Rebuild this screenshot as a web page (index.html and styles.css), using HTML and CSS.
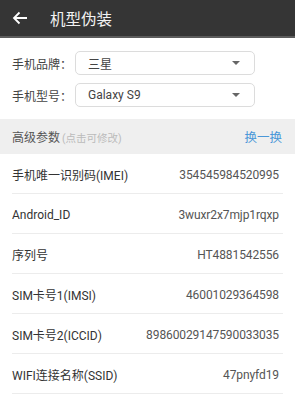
FILE: index.html
```html
<!DOCTYPE html>
<html>
<head>
<meta charset="utf-8">
<link rel="stylesheet" href="styles.css">
</head>
<body>
<div class="header">
  <svg class="back" width="16" height="14" viewBox="0 0 16 14"><path d="M15 7H2M7.5 1.5L2 7l5.5 5.5" fill="none" stroke="#fff" stroke-width="1.8"/></svg>
  <span class="title">机型伪装</span>
</div>
<div class="form">
  <div class="frow">
    <span class="flabel">手机品牌：</span>
    <div class="select"><span>三星</span><span class="caret"></span></div>
  </div>
  <div class="frow">
    <span class="flabel">手机型号：</span>
    <div class="select"><span>Galaxy S9</span><span class="caret"></span></div>
  </div>
</div>
<div class="band">
  <span class="btitle">高级参数<small>(点击可修改)</small></span>
  <span class="swap">换一换</span>
</div>
<div class="list">
  <div class="row"><span class="k">手机唯一识别码(IMEI)</span><span class="v">354545984520995</span></div>
  <div class="row"><span class="k">Android_ID</span><span class="v">3wuxr2x7mjp1rqxp</span></div>
  <div class="row"><span class="k">序列号</span><span class="v">HT4881542556</span></div>
  <div class="row"><span class="k">SIM卡号1(IMSI)</span><span class="v">46001029364598</span></div>
  <div class="row"><span class="k">SIM卡号2(ICCID)</span><span class="v">89860029147590033035</span></div>
  <div class="row"><span class="k">WIFI连接名称(SSID)</span><span class="v">47pnyfd19</span></div>
</div>
</body>
</html>
```

FILE: styles.css
```css
* { box-sizing: border-box; }
body {
  margin: 0;
  width: 295px;
  background: #fff;
  font-family: Roboto, "Noto Sans CJK SC", sans-serif;
  color: #333;
}
.header {
  height: 38px;
  background: #353535;
  border-bottom: 2px solid #5c5c5c;
  display: flex;
  align-items: center;
  padding-left: 12px;
}
.back { display: block; }
.title {
  color: #f2f2f2;
  font-size: 15.5px;
  margin-left: 22px;
  font-family: "Noto Sans CJK SC", sans-serif;
}
.form {
  padding: 13px 40px 12px 12px;
  display: flex;
  flex-direction: column;
  gap: 8px;
}
.frow {
  display: flex;
  align-items: center;
}
.flabel {
  width: 63px;
  flex-shrink: 0;
  white-space: nowrap;
  font-size: 12px;
  color: #444;
}
.select {
  flex: 1;
  height: 24px;
  border: 1px solid #dcdcdc;
  border-radius: 5px;
  display: flex;
  align-items: center;
  justify-content: space-between;
  padding: 0 14px 0 12px;
  font-size: 12px;
  color: #444;
}
.caret {
  width: 0;
  height: 0;
  border-left: 4px solid transparent;
  border-right: 4px solid transparent;
  border-top: 4px solid #666;
}
.band {
  height: 35px;
  background: #efefef;
  display: flex;
  align-items: center;
  justify-content: space-between;
  padding: 0 13px 0 12px;
}
.btitle {
  font-size: 12px;
  color: #555;
}
.btitle small {
  font-size: 10.5px;
  color: #bbb;
  margin-left: 2px;
}
.swap {
  font-size: 12.5px;
  color: #4a97d8;
}
.list { padding: 0 12px; }
.row {
  height: 40px;
  border-bottom: 1px solid #ececec;
  display: flex;
  align-items: center;
  justify-content: space-between;
  padding: 2px 4px 0 0;
}
.k { font-size: 12px; color: #333; white-space: nowrap; }
.v { font-size: 12px; letter-spacing: -0.1px; color: #555; white-space: nowrap; }
```
